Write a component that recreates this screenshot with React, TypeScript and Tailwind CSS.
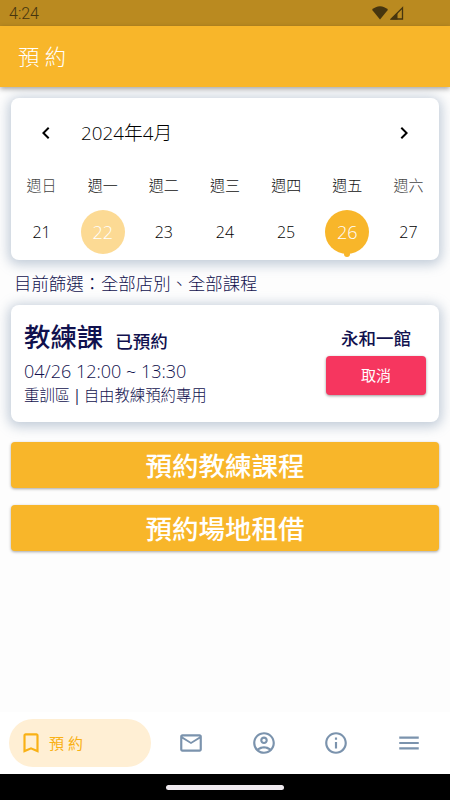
import type { ReactNode } from "react";
import {
  MdBookmarkBorder,
  MdChevronLeft,
  MdChevronRight,
  MdInfoOutline,
  MdMailOutline,
  MdMenu,
  MdOutlineAccountCircle,
} from "react-icons/md";

type Day = {
  label: string;
  date: number;
  state?: "today" | "selected";
  weekend?: boolean;
};

const days: Day[] = [
  { label: "週日", date: 21, weekend: true },
  { label: "週一", date: 22, state: "today" },
  { label: "週二", date: 23 },
  { label: "週三", date: 24 },
  { label: "週四", date: 25 },
  { label: "週五", date: 26, state: "selected" },
  { label: "週六", date: 27, weekend: true },
];

function StatusBar() {
  return (
    <div className="flex h-[26px] items-center justify-between bg-[#ba8a20] pr-[46px] pl-[9px] text-[#46350f]">
      <span className="pt-px font-['Roboto'] text-base leading-none">4:24</span>
      <div className="flex items-end gap-[2px]">
        <svg width="16" height="14" viewBox="0 0 16 14" fill="currentColor">
          <path d="M0 3.8C4.5-.9 11.5-.9 16 3.8L8 13.6Z" />
        </svg>
        <svg width="14" height="14" viewBox="0 0 14 14">
          <path d="M1.2 13H12.5V1.7Z" fill="none" stroke="currentColor" strokeWidth="1.3" />
          <path d="M1 13.4H7.5V6.7Z" fill="currentColor" />
        </svg>
      </div>
    </div>
  );
}

function Card({ className, children }: { className: string; children: ReactNode }) {
  return (
    <section className={`rounded-[8px] bg-white shadow-[0_2px_12px_3px_rgba(110,135,165,0.4)] ${className}`}>
      {children}
    </section>
  );
}

function DayCell({ day }: { day: Day }) {
  if (day.state) {
    const selected = day.state === "selected";
    return (
      <div
        className={`relative flex size-11 items-center justify-center rounded-full text-[18px] text-white ${
          selected ? "bg-[#f8b62a]" : "bg-[#fcda94]"
        }`}
      >
        {day.date}
        {selected && (
          <span className="absolute -bottom-[3px] left-[19px] size-[6px] rounded-full bg-[#f8b62a]" />
        )}
      </div>
    );
  }
  return <div className="flex size-11 items-center justify-center text-base text-black">{day.date}</div>;
}

function Calendar() {
  return (
    <Card className="h-[162px]">
      <div className="flex h-[70px] items-center px-[23px] text-black">
        <MdChevronLeft size={24} />
        <h2 className="ml-[23px] flex-1 text-[18.8px]">2024年4月</h2>
        <MdChevronRight size={24} />
      </div>
      <div className="grid grid-cols-7">
        {days.map((day) => (
          <div key={day.date} className="flex flex-col items-center">
            <span className={`h-[42px] pt-[7px] text-[15px] leading-5 ${day.weekend ? "text-[#444]" : "text-[#111]"}`}>
              {day.label}
            </span>
            <DayCell day={day} />
          </div>
        ))}
      </div>
    </Card>
  );
}

function Booking() {
  return (
    <Card className="flex h-[117px] justify-between pr-[13px] pl-[13px]">
      <div className="flex flex-col pt-[13px]">
        <div className="flex h-[40px] items-baseline gap-3">
          <h3 className="text-[26.4px] leading-[38px] font-medium">教練課</h3>
          <span className="relative top-px text-[17.5px] font-medium">已預約</span>
        </div>
        <p className="text-[18px] leading-[26px]">04/26 12:00 ~ 13:30</p>
        <p className="pt-px text-[15.4px] leading-[22px] [word-spacing:-1.5px]">
          重訓區 <span className="font-normal">|</span> 自由教練預約專用
        </p>
      </div>
      <div className="flex w-[100px] flex-col items-center pt-[21px]">
        <span className="text-[17.5px] leading-6 font-medium">永和一館</span>
        <button className="mt-[6px] h-[39px] w-full rounded-[4px] bg-[#f6365f] text-[15px] font-normal text-white shadow-[0_1px_3px_rgba(0,0,0,0.4)]">
          取消
        </button>
      </div>
    </Card>
  );
}

function ActionButton({ children }: { children: ReactNode }) {
  return (
    <button className="h-[46px] w-full rounded-[4px] bg-[#f8b62a] pt-[3px] text-[26.5px] leading-none font-medium text-white shadow-[0_1px_3px_rgba(0,0,0,0.35)]">
      {children}
    </button>
  );
}

function BottomNav() {
  return (
    <nav className="flex h-[62px] items-center bg-white pl-[9px] text-[#7b93ad]">
      <div className="flex h-12 w-[142px] items-center rounded-full bg-[#ffefd4] pl-[9px] text-[#f9b115]">
        <MdBookmarkBorder size={26} />
        <span className="ml-[5px] text-[15px] font-normal">預 約</span>
      </div>
      <div className="flex flex-1 justify-between pr-[28px] pl-[27px]">
        <MdMailOutline size={26} />
        <MdOutlineAccountCircle size={26} />
        <MdInfoOutline size={26} />
        <MdMenu size={26} />
      </div>
    </nav>
  );
}

export default function App() {
  return (
    <div className="flex h-[800px] w-[450px] flex-col overflow-hidden bg-[#fdfdfd] font-['Open_Sans','Noto_Sans_CJK_TC',sans-serif] font-light text-[#11114e]">
      <StatusBar />
      <header className="z-10 flex h-[61px] items-center bg-[#f8b62a] pt-px pl-[18px] text-[21.3px] text-white shadow-[0_2px_5px_rgba(0,0,0,0.35)]">
        預 約
      </header>
      <main className="flex-1 px-[11px] pt-[11px]">
        <Calendar />
        <p className="flex h-[45px] items-center pt-px pl-[3px] text-[17.4px]">目前篩選：全部店別、全部課程</p>
        <Booking />
        <div className="mt-5 flex flex-col gap-[17px]">
          <ActionButton>預約教練課程</ActionButton>
          <ActionButton>預約場地租借</ActionButton>
        </div>
      </main>
      <BottomNav />
      <div className="flex h-[26px] items-center justify-center bg-black">
        <div className="h-[5px] w-[118px] rounded-full bg-[#eee9ee]" />
      </div>
    </div>
  );
}
